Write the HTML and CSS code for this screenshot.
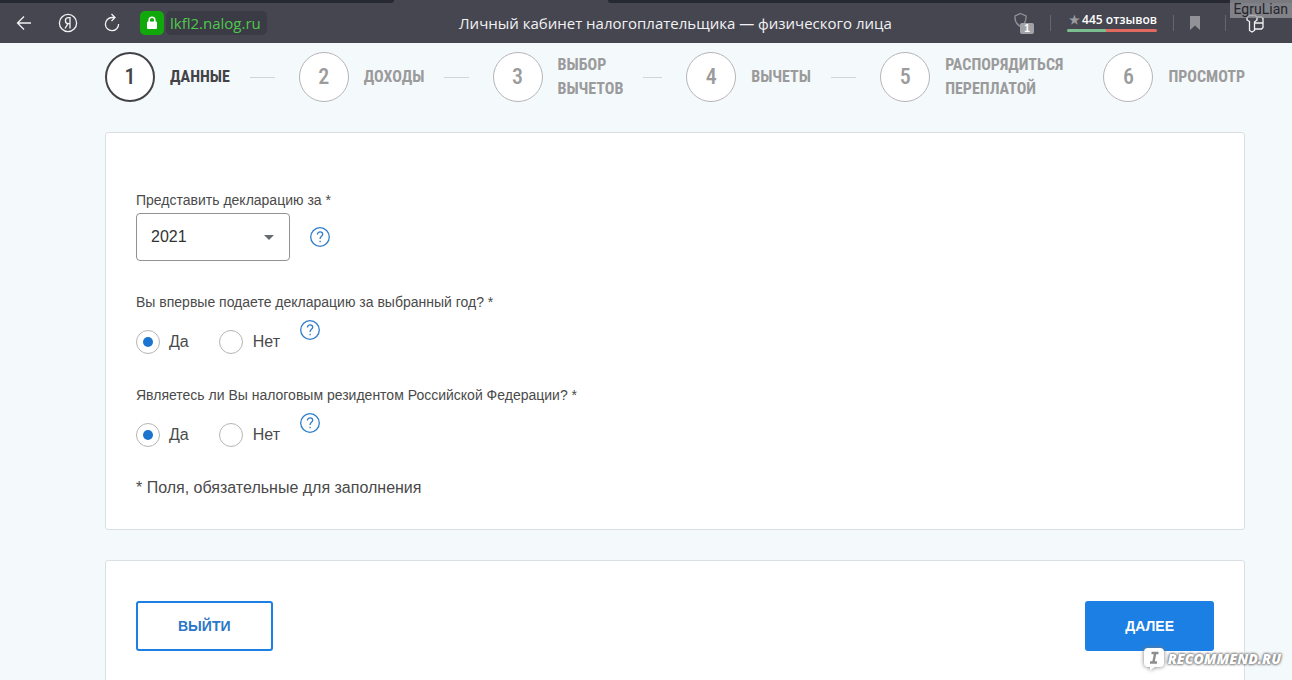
FILE: index.html
```html
<!DOCTYPE html>
<html lang="ru">
<head>
<meta charset="utf-8">
<meta name="viewport" content="width=device-width, initial-scale=1">
<title>Личный кабинет налогоплательщика — физического лица</title>
<link rel="stylesheet" href="styles.css">
</head>
<body>
<div class="browser">
  <header class="chrome">
    <div class="tabs"><span class="tab-left"></span><span class="tab-active"></span><span class="tab-right"></span></div>
    <div class="toolbar">
      <nav class="nav">
        <button class="tool" type="button" aria-label="Назад">
          <svg width="16" height="16" viewBox="0 0 16 16" fill="none" stroke="currentColor" stroke-width="1.3"><path d="M15 8H1.5M8 1.5 1.5 8 8 14.5"/></svg>
        </button>
        <button class="tool" type="button" aria-label="Яндекс">
          <svg width="20" height="20" viewBox="0 0 20 20" fill="none" stroke="currentColor" stroke-width="1.3"><circle cx="10" cy="10" r="8.6"/><path d="M12 15.5V4.7h-1.4c-2 0-3.200 1.200-3.200 3 0 1.900 1.200 3 3.200 3H12M10 10.700 7 15.500"/></svg>
        </button>
        <button class="tool" type="button" aria-label="Обновить">
          <svg width="18" height="20" viewBox="0 0 18 20" fill="none" stroke="currentColor" stroke-width="1.3"><path d="M11.500 4.500H9A6.600 6.600 0 1 0 15.600 11M8.500 1l3.500 3.500L8.500 8"/></svg>
        </button>
        <span class="lock">
          <svg width="12" height="14" viewBox="0 0 12 14"><path d="M3.200 6V4a2.800 2.800 0 0 1 5.600 0v2" fill="none" stroke="#fff" stroke-width="1.600"/><rect x="1" y="5.500" width="10" height="7.500" rx="1" fill="#fff"/></svg>
        </span>
        <a class="address" href="#">lkfl2.nalog.ru</a>
      </nav>
      <p class="page-title">Личный кабинет налогоплательщика — физического лица</p>
      <div class="extras">
        <button class="tool shield" type="button" aria-label="Защита">
          <svg width="20" height="22" viewBox="0 0 20 22"><path d="M6.500 1.500 12 4c.3 3.800-.6 8-5.500 10.500C1.600 12 .7 7.800 1 4z" fill="none" stroke="#929197" stroke-width="1.300"/></svg>
          <span class="shield-count">1</span>
        </button>
        <span class="divider"></span>
        <a class="reviews" href="#"><span><span class="star">★</span>445 отзывов</span></a>
        <span class="divider"></span>
        <button class="tool bookmark" type="button" aria-label="Закладка">
          <svg width="10" height="14" viewBox="0 0 10 14"><path d="M0 0h10v14L5 9.500 0 14z" fill="#929197"/></svg>
        </button>
        <span class="divider"></span>
        <button class="tool extensions" type="button" aria-label="Расширения">
          <svg width="18" height="19" viewBox="0 0 18 19" fill="none" stroke="currentColor" stroke-width="1.300"><path d="M3.500 7.500 1 6V3l3-1.500h5L11 3v3L8.500 8v8.500L6 18l-2.500-1.500zM11 3h4.500L17 4.500v9L15.500 15H8.500M8.500 9H17"/></svg>
        </button>
      </div>
    </div>
    <span class="author">EgruLian</span>
  </header>

  <main class="page">
    <ol class="steps">
      <li class="step step-current"><span class="number">1</span><span>Данные</span></li>
      <li class="step"><span class="number">2</span><span>Доходы</span></li>
      <li class="step"><span class="number">3</span><span>Выбор<br>вычетов</span></li>
      <li class="step"><span class="number">4</span><span>Вычеты</span></li>
      <li class="step"><span class="number">5</span><span>Распорядиться<br>переплатой</span></li>
      <li class="step"><span class="number">6</span><span>Просмотр</span></li>
    </ol>

    <form class="form">
      <section class="card fields">
        <div class="field">
          <label class="question" for="year">Представить декларацию за *</label>
          <div class="select-row">
            <span class="select-box">
              <select class="year" id="year"><option>2021</option></select>
              <svg class="arrow" width="10" height="5" viewBox="0 0 10 5"><path d="M0 0h10L5 5z" fill="#666b70"/></svg>
            </span>
            <button class="help" type="button" aria-label="Справка"><svg width="20" height="20" viewBox="0 0 20 20" fill="none" stroke="currentColor" stroke-width="1.300"><circle cx="10" cy="10" r="9.300"/><path d="M7.400 7.600c0-1.700 1.100-2.700 2.700-2.700 1.500 0 2.600.9 2.600 2.300 0 1.900-2.600 2.200-2.600 4.300v.5M10.100 13.800v1.400"/></svg></button>
          </div>
        </div>

        <fieldset class="field">
          <legend class="question">Вы впервые подаете декларацию за выбранный год? *</legend>
          <div class="choices">
            <label class="choice"><input class="radio" type="radio" name="first" checked>Да</label>
            <label class="choice"><input class="radio" type="radio" name="first">Нет</label>
            <button class="help" type="button" aria-label="Справка"><svg width="20" height="20" viewBox="0 0 20 20" fill="none" stroke="currentColor" stroke-width="1.300"><circle cx="10" cy="10" r="9.300"/><path d="M7.400 7.600c0-1.700 1.100-2.700 2.700-2.700 1.500 0 2.600.9 2.600 2.300 0 1.900-2.600 2.200-2.600 4.300v.5M10.100 13.800v1.400"/></svg></button>
          </div>
        </fieldset>

        <fieldset class="field">
          <legend class="question">Являетесь ли Вы налоговым резидентом Российской Федерации? *</legend>
          <div class="choices">
            <label class="choice"><input class="radio" type="radio" name="resident" checked>Да</label>
            <label class="choice"><input class="radio" type="radio" name="resident">Нет</label>
            <button class="help" type="button" aria-label="Справка"><svg width="20" height="20" viewBox="0 0 20 20" fill="none" stroke="currentColor" stroke-width="1.300"><circle cx="10" cy="10" r="9.300"/><path d="M7.400 7.600c0-1.700 1.100-2.700 2.700-2.700 1.500 0 2.600.9 2.600 2.300 0 1.900-2.600 2.200-2.600 4.300v.5M10.100 13.800v1.400"/></svg></button>
          </div>
        </fieldset>

        <p class="note">* Поля, обязательные для заполнения</p>
      </section>

      <section class="card actions">
        <button class="button button-outline" type="button">Выйти</button>
        <button class="button button-solid" type="button">Далее</button>
      </section>
    </form>
  </main>

  <div class="recommend">
    <svg class="bubble" width="24" height="24" viewBox="0 0 24 24"><path d="M6 1h12q4 0 4 4v11q0 4-4 4h-5l-5 3.500V20H6q-4 0-4-4V5q0-4 4-4z" fill="#fff"/><path d="M9.500 6h7M8 15.500h7M13.300 6l-2 9.500" stroke="#8d8d8d" stroke-width="2.400" fill="none"/></svg>
    <span>RECOMMEND.RU</span>
  </div>
</div>
</body>
</html>
```
FILE: styles.css
```css
* {
  box-sizing: border-box;
}

body {
  margin: 0;
  background: #f4f9fc;
  color: #4a4a4a;
  font-family: "Liberation Sans", Arial, sans-serif;
  font-size: 16px;
  line-height: 20px;
}

button {
  font: inherit;
  cursor: pointer;
}

.browser {
  position: relative;
  display: flex;
  flex-direction: column;
  height: 100vh;
  overflow: hidden;
}

.chrome {
  position: relative;
  background: #464650;
  color: #f2f2f4;
}

.tabs {
  display: flex;
  height: 3px;
}

.tab-left,
.tab-right {
  background: #262832;
}

.tab-left {
  flex: 394;
  border-bottom-right-radius: 3px;
}

.tab-active {
  flex: 214;
}

.tab-right {
  flex: 684;
  border-bottom-left-radius: 3px;
}

.toolbar {
  display: flex;
  align-items: center;
  height: 40px;
  padding: 0 28px 0 16px;
}

.nav,
.extras {
  display: flex;
  align-items: center;
}

.tool {
  display: flex;
  padding: 0;
  border: 0;
  background: none;
  color: inherit;
}

.nav .tool {
  margin-right: 26px;
}

.nav .tool + .tool {
  margin-right: 25px;
}

.nav .tool + .tool + .tool {
  margin-right: 19px;
}

.lock {
  display: flex;
  align-items: center;
  justify-content: center;
  width: 24px;
  height: 24px;
  border-radius: 5px;
  background: #11a80b;
}

.address {
  margin-left: 2px;
  padding: 0 6px 0 4px;
  border-radius: 5px;
  background: #3a3b45;
  color: #4fc84d;
  font-family: "Open Sans", "Noto Sans", sans-serif;
  font-size: 15px;
  line-height: 24px;
  text-decoration: none;
}

.page-title {
  flex: 1;
  margin: 0;
  padding-left: 70px;
  font-family: "Open Sans", "Noto Sans", sans-serif;
  font-size: 15px;
  text-align: center;
  white-space: nowrap;
}

.extras {
  gap: 16px;
}

.shield {
  position: relative;
}

.shield-count {
  position: absolute;
  right: 0;
  bottom: 0;
  width: 14px;
  border-radius: 2px;
  background: #a3a3a7;
  color: #fff;
  font-size: 10px;
  font-weight: bold;
  line-height: 11px;
  text-align: center;
}

.divider {
  width: 1px;
  height: 16px;
  background: #65656e;
}

.bookmark {
  margin-right: 9px;
}

.extensions {
  margin-left: 4px;
}

.reviews {
  display: flex;
  flex-direction: column;
  padding-bottom: 4px;
  color: #fff;
  font-family: "Open Sans", "Noto Sans", sans-serif;
  font-size: 12px;
  font-weight: 600;
  line-height: 18px;
  text-decoration: none;
  white-space: nowrap;
}

.reviews::after {
  content: "";
  height: 3px;
  border-radius: 2px;
  background: linear-gradient(to right, #7cbd90 43%, #e06a60 43%);
}

.star {
  margin: 0 2px;
  color: #9a9aa0;
}

.author {
  position: absolute;
  top: 0;
  right: 0;
  padding: 0 4px;
  background: rgba(150, 150, 155, 0.75);
  color: #26262b;
  font-family: Roboto, sans-serif;
  font-size: 14px;
  line-height: 18px;
}

.page {
  flex: 1;
  min-height: 0;
  padding: 9px 47px 0 105px;
  overflow: hidden;
}

.steps {
  display: grid;
  grid-template-columns: repeat(4, 1fr) auto auto;
  margin: 0 0 30px;
  padding: 0;
  list-style: none;
}

.step {
  display: flex;
  align-items: center;
  min-height: 50px;
  color: #9b9b9b;
  font-family: "Roboto Condensed", "Liberation Sans Narrow", "Liberation Sans", sans-serif;
  font-size: 16px;
  font-weight: bold;
  line-height: 24px;
  text-transform: uppercase;
  white-space: nowrap;
}

.step::after {
  content: "";
  flex: 1;
  height: 1px;
  margin: 0 24px 0 20px;
  background: #d0d5d8;
}

.step:nth-child(5)::after {
  flex: none;
  margin: 0 0 0 40px;
}

.step:last-child::after {
  display: none;
}

.number {
  flex: none;
  width: 50px;
  height: 50px;
  margin-right: 15px;
  border: 1px solid #b5b5b8;
  border-radius: 50%;
  background: #fff;
  font-size: 22px;
  font-weight: 500;
  line-height: 48px;
  text-align: center;
}

.step-current {
  color: #434347;
}

.step-current .number {
  border: 2px solid #434347;
  line-height: 46px;
}

.card {
  border: 1px solid #d9dfe3;
  border-radius: 3px;
  background: #fff;
}

.fields {
  display: flex;
  flex-direction: column;
  gap: 31px;
  margin-bottom: 30px;
  padding: 57px 30px 31px;
}

.field {
  min-width: 0;
  margin: 0;
  padding: 0;
  border: 0;
}

.question {
  display: block;
  padding: 0;
  font-size: 14px;
  line-height: 20px;
}

.select-row {
  display: flex;
  align-items: center;
  gap: 20px;
  margin-top: 3px;
}

.select-box {
  position: relative;
}

.year {
  display: block;
  width: 154px;
  height: 48px;
  padding: 0 14px;
  border: 1px solid #929292;
  border-radius: 4px;
  background: #fff;
  color: #333;
  font: inherit;
  appearance: none;
}

.arrow {
  position: absolute;
  top: 22px;
  right: 16px;
  pointer-events: none;
}

.help {
  display: flex;
  padding: 0;
  border: 0;
  background: none;
  color: #2f7dc8;
}

.choices {
  display: flex;
  align-items: flex-start;
  margin-top: 8px;
}

.choice {
  display: flex;
  align-items: center;
  gap: 9px;
  margin-right: 30px;
  padding-top: 10px;
}

.choice + .choice {
  gap: 10px;
  margin-right: 20px;
}

.radio {
  display: grid;
  place-items: center;
  width: 24px;
  height: 24px;
  margin: 0;
  border: 1px solid #b5b5b5;
  border-radius: 50%;
  background: #fff;
  appearance: none;
}

.radio:checked::before {
  content: "";
  width: 10px;
  height: 10px;
  border-radius: 50%;
  background: #1b75d0;
}

.note {
  margin: 0;
}

.actions {
  display: flex;
  justify-content: space-between;
  padding: 40px 30px;
}

.button {
  height: 50px;
  border: 2px solid #1c7fe3;
  border-radius: 3px;
  font-size: 14px;
  font-weight: bold;
  text-transform: uppercase;
}

.button-outline {
  padding: 0 40px;
  background: #fff;
  color: #2b76c8;
}

.button-solid {
  padding: 0 38px;
  background: #1c7fe3;
  color: #fff;
}

.recommend {
  position: absolute;
  right: 11px;
  bottom: 9px;
  display: flex;
  align-items: center;
  gap: 2px;
  color: #fff;
  font-family: "Open Sans", sans-serif;
  font-size: 14px;
  font-style: italic;
  font-weight: 800;
  text-shadow: 0 0 3px #777, 0 0 3px #777, 0 0 2px #777;
}

.bubble {
  filter: drop-shadow(0 0 2px #777);
}
```
